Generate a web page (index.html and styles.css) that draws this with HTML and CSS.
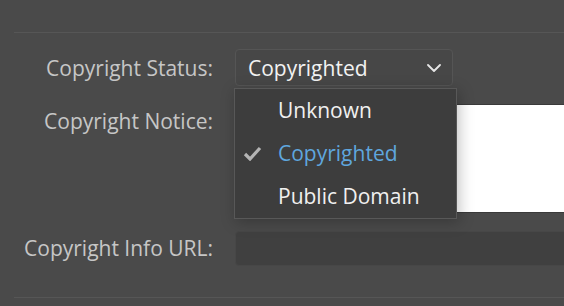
FILE: index.html
```html
<!DOCTYPE html>
<html lang="en">
<head>
    <meta charset="UTF-8">
    <meta name="viewport" content="width=device-width, initial-scale=1.0">
    <title>Copyright</title>
    <link rel="stylesheet" href="styles.css">
</head>
<body>
    <!-- Painel de copyright -->
    <div class="panel">
        <div class="form">
            <label class="label">Copyright Status:</label>
            <div class="select-wrap">
                <div class="select">
                    <span>Copyrighted</span>
                    <svg class="chevron" width="14" height="8" viewBox="0 0 14 8">
                        <path d="M1 1 L7 7 L13 1" fill="none" stroke="#e6e6e6" stroke-width="1.8" stroke-linecap="round" stroke-linejoin="round"/>
                    </svg>
                </div>

                <!-- Menu aberto -->
                <ul class="menu">
                    <li class="item">Unknown</li>
                    <li class="item selected">
                        <svg class="check" width="19" height="15" viewBox="0 0 19 15">
                            <path d="M2 8 L7 13 L17 2" fill="none" stroke="#b4b4b4" stroke-width="3.2" stroke-linejoin="miter"/>
                        </svg>
                        Copyrighted
                    </li>
                    <li class="item">Public Domain</li>
                </ul>
            </div>

            <label class="label label-top">Copyright Notice:</label>
            <div class="notice"></div>

            <label class="label">Copyright Info URL:</label>
            <div class="url"></div>
        </div>
    </div>
</body>
</html>
```

FILE: styles.css
```css
body {
    font-family: "Open Sans", "Noto Sans", sans-serif;
    margin: 0;
    padding: 0;
    background-color: #4a4a4a;
    overflow: hidden;
    height: 306px;
}

.panel {
    margin-top: 32px;
    margin-left: 14px;
    border-top: 1px solid #565656;
    border-bottom: 1px solid #565656;
    padding: 16px 0 31px 0;
}

.form {
    display: grid;
    grid-template-columns: 199px 1fr;
    grid-template-rows: 37px 110px 36px;
    column-gap: 22px;
    row-gap: 17px;
    margin-right: -10px;
}

.label {
    color: #c6c6c6;
    font-size: 21px;
    text-align: right;
    align-self: center;
    white-space: nowrap;
}

.label-top {
    align-self: start;
    padding-top: 4px;
}

.select-wrap {
    position: relative;
    width: 218px;
}

.select {
    display: flex;
    align-items: center;
    justify-content: space-between;
    box-sizing: border-box;
    height: 37px;
    padding: 0 11px 0 12px;
    border: 1px solid #555;
    border-radius: 4px;
    background-color: #474747;
    color: #f2f2f2;
    font-size: 21px;
}

/* Menu suspenso */
.menu {
    position: absolute;
    z-index: 1;
    left: -1px;
    top: 39px;
    width: 223px;
    box-sizing: border-box;
    margin: 0;
    padding: 0;
    list-style: none;
    background-color: #3d3d3d;
    border: 1px solid #585858;
    box-shadow: 2px 3px 14px rgba(0, 0, 0, 0.25);
}

.item {
    position: relative;
    height: 43px;
    line-height: 43px;
    padding-left: 43px;
    color: #f0f0f0;
    font-size: 21px;
}

.selected {
    color: #5fa6de;
}

.check {
    position: absolute;
    left: 8px;
    top: 14px;
}

.notice {
    margin-top: 1px;
    background-color: #ffffff;
    border: 1px solid #3a3a3a;
    border-radius: 3px;
}

.url {
    margin-top: 1px;
    background-color: #404040;
    border: 1px solid #474747;
    border-radius: 4px;
}
```
